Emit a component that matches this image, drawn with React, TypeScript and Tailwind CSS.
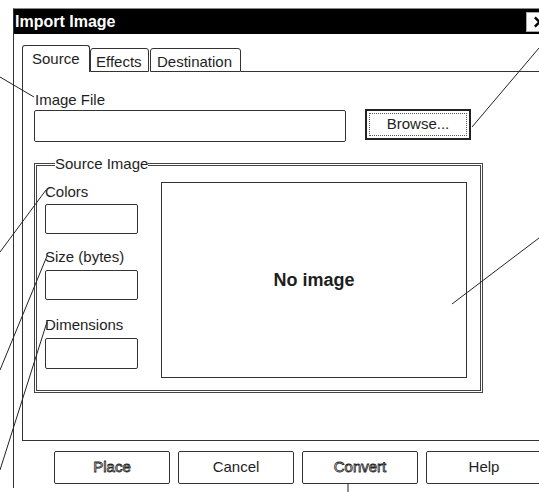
import React from "react";

const tabBase = "border border-[#333] rounded-t-[3px] text-[15px] leading-[18px] bg-white";

function TitleBar() {
  return (
    <div className="h-[25px] bg-black text-white font-bold text-[16px] leading-[20px] pl-[1px] flex items-center">
      <span>Import Image</span>
      <div className="ml-auto mr-[7px] w-[20px] h-[20px] bg-white border border-[#aaa] flex items-center pl-[7px]">
        <svg width="12" height="12" viewBox="0 0 12 12">
          <path d="M1 1 L11 11 M11 1 L1 11" stroke="#000" strokeWidth="2.6" />
        </svg>
      </div>
    </div>
  );
}

function Tabs() {
  return (
    <div className="flex items-end h-[27px]">
      <div className={`${tabBase} h-[27px] w-[68px] border-b-0 pl-[9px] pt-[4px]`}>Source</div>
      <div className={`${tabBase} h-[24px] w-[59px] pl-[5px] pt-[4px]`}>Effects</div>
      <div className={`${tabBase} ml-[1px] h-[24px] w-[91px] pl-[6px] pt-[4px]`}>Destination</div>
      <div className="flex-1 border-b border-[#333]" />
    </div>
  );
}

function Field({ className = "" }: { className?: string }) {
  return <div className={`w-[93px] border border-[#333] rounded-[2px] ${className}`} />;
}

function SourceImage() {
  return (
    <fieldset className="mt-[13px] w-[448px] border-[3px] border-double border-[#444] pl-[8px] pr-[13px] pb-[12px]">
      <legend className="ml-[10px] text-[15px] leading-[18px]">Source Image</legend>
      <div className="flex items-start pt-[9px]">
        <div className="flex flex-col w-[93px] pt-[1px] text-[15px] leading-[18px]">
          <span>Colors</span>
          <Field className="mt-[3px] h-[30px]" />
          <span className="mt-[14px]">Size (bytes)</span>
          <Field className="mt-[4px] h-[30px]" />
          <span className="mt-[16px]">Dimensions</span>
          <Field className="mt-[4px] h-[31px]" />
        </div>
        <div className="ml-[23px] w-[306px] h-[196px] border border-[#333] flex items-center justify-center font-bold text-[18px]">
          No image
        </div>
      </div>
    </fieldset>
  );
}

function Panel() {
  return (
    <div className="h-[369px] border-l border-b border-[#333] pl-[11px] pt-[19px]">
      <div className="pl-[1px] text-[15px] leading-[18px]">Image File</div>
      <div className="flex items-start">
        <div className="mt-[1px] w-[312px] h-[32px] border border-[#333] rounded-[2px]" />
        <button className="ml-[19px] w-[106px] h-[31px] border-2 border-[#222] p-[2px] bg-white">
          <span className="flex h-full w-full items-center justify-center border border-dotted border-[#555] text-[15px]">
            Browse...
          </span>
        </button>
      </div>
      <SourceImage />
    </div>
  );
}

function Btn({ label, disabled }: { label: string; disabled?: boolean }) {
  return (
    <button
      className={`w-[116px] h-[33px] border border-[#333] rounded-[2px] bg-white text-[15px] ${
        disabled ? "text-white [-webkit-text-stroke:0.8px_#222]" : ""
      }`}
    >
      {label}
    </button>
  );
}

function Callouts() {
  const lines = [
    [0, 77, 34, 97],
    [539, 48, 472, 127],
    [0, 252, 46, 190],
    [47, 256, 0, 370],
    [47, 322, 0, 470],
    [452, 304, 539, 238],
    [348, 483, 348, 492],
  ];
  return (
    <svg className="absolute inset-0 pointer-events-none" width="539" height="492">
      {lines.map(([x1, y1, x2, y2], i) => (
        <line key={i} x1={x1} y1={y1} x2={x2} y2={y2} stroke="#222" strokeWidth="1" />
      ))}
    </svg>
  );
}

export default function App() {
  return (
    <div className="relative w-[539px] h-[492px] overflow-hidden bg-white font-['Liberation_Sans',Arial,sans-serif] text-[#1e1e1e]">
      <div className="ml-[13px] mt-[8px] w-[540px] h-[480px] border-l border-t border-l-[#333] border-t-[#888] flex flex-col">
        <TitleBar />
        <div className="pl-[8px] pt-[11px]">
          <Tabs />
          <Panel />
          <div className="mt-[10px] ml-[32px] flex gap-[8px]">
            <Btn label="Place" disabled />
            <Btn label="Cancel" />
            <Btn label="Convert" disabled />
            <Btn label="Help" />
          </div>
        </div>
      </div>
      <Callouts />
    </div>
  );
}
